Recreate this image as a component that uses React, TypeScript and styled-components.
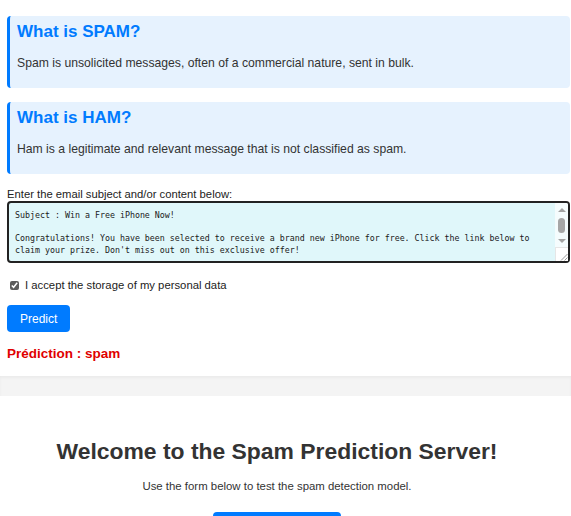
import React from 'react';
import styled, { createGlobalStyle } from 'styled-components';

const GlobalStyle = createGlobalStyle`
  body {
    margin: 0;
    background: #f4f4f4;
    font-family: 'Liberation Sans', Arial, sans-serif;
    color: #333;
  }
`;

const FormSection = styled.section`
  background: #fff;
  padding: 16px 1px 14px 7px;
`;

const InfoBox = styled.div`
  background: #e6f2fe;
  border-left: 3px solid #007bff;
  border-radius: 4px;
  padding: 6px 7px 17px;
  margin-bottom: 14px;

  &:last-of-type {
    margin-bottom: 0;
  }
`;

const InfoTitle = styled.h2`
  margin: 0;
  font-size: 17px;
  line-height: 20px;
  color: #007bff;
`;

const InfoText = styled.p`
  margin: 13px 0 0;
  font-size: 12.2px;
  line-height: 16px;
  color: #333;
`;

const FieldLabel = styled.label`
  display: block;
  margin-top: 13px;
  font-size: 11.25px;
  line-height: 13px;
  color: #222;
`;

const InputWrap = styled.div`
  position: relative;
`;

const MessageInput = styled.textarea`
  display: block;
  box-sizing: border-box;
  width: 100%;
  height: 62px;
  margin: 0;
  padding: 7px 21px 5px 6px;
  border: 2px solid #222;
  border-radius: 4px;
  background: #e0f7fa;
  font-family: 'DejaVu Sans Mono', 'Liberation Mono', monospace;
  font-size: 8.3px;
  line-height: 11.5px;
  color: #1a1a1a;
  resize: none;
  overflow: hidden;
`;

/* drawn scrollbar, the headless browser hides the native one */
const ScrollTrack = styled.div`
  position: absolute;
  top: 2px;
  right: 2px;
  bottom: 2px;
  width: 13px;
  display: flex;
  flex-direction: column;
  align-items: center;
  background: #f5fcfd;
  border-radius: 0 2px 2px 0;
  pointer-events: none;
`;

const Arrow = styled.div<{ $down?: boolean }>`
  width: 0;
  height: 0;
  margin: ${(p) => (p.$down ? '0 0 4px' : '5px 0 6px')};
  border-left: 4px solid transparent;
  border-right: 4px solid transparent;
  ${(p) => (p.$down ? 'border-top: 4px solid #a3a3a3;' : 'border-bottom: 4px solid #a3a3a3;')}
`;

const Thumb = styled.div`
  width: 7px;
  height: 15px;
  border-radius: 4px;
  background: #a6a6a6;
`;

const Spacer = styled.div`
  flex: 1;
`;

const Grip = styled.div`
  align-self: stretch;
  height: 13px;
  background: #fff;
  border-top: 1px solid #e6e6e6;
  border-left: 1px solid #e6e6e6;
  display: flex;
  align-items: flex-end;
  justify-content: flex-end;
`;

const ScrollBar = () => (
  <ScrollTrack>
    <Arrow />
    <Thumb />
    <Spacer />
    <Arrow $down />
    <Grip>
      <svg width="9" height="9" viewBox="0 0 9 9">
        <path d="M8.5 2 L2 8.5 M8.5 5.5 L5.5 8.5" stroke="#9a9a9a" strokeWidth="1" />
      </svg>
    </Grip>
  </ScrollTrack>
);

const ConsentRow = styled.label`
  display: flex;
  align-items: center;
  margin-top: 15px;
  font-size: 11.3px;
  line-height: 14px;
  color: #222;

  input {
    width: 9px;
    height: 9px;
    margin: 0 6px 0 3px;
    accent-color: #5c5c5c;
  }
`;

const PrimaryButton = styled.button`
  display: block;
  margin-top: 13px;
  height: 27px;
  padding: 0 13px;
  border: none;
  border-radius: 4px;
  background: #007bff;
  color: #fff;
  font-family: 'Liberation Sans', Arial, sans-serif;
  font-size: 12px;
  cursor: pointer;
`;

const Result = styled.p`
  margin: 14px 0 0;
  font-size: 13.5px;
  line-height: 16px;
  font-weight: bold;
  color: #e00000;
`;

const Band = styled.div`
  height: 20px;
  box-shadow: inset 0 2px 3px rgba(0, 0, 0, 0.04);
`;

const Welcome = styled.section`
  background: #fff;
  padding: 42px 37px 40px 20px;
  text-align: center;
`;

const WelcomeTitle = styled.h1`
  margin: 0;
  font-size: 22.9px;
  line-height: 26px;
  color: #333;
`;

const WelcomeText = styled.p`
  margin: 15px 0 0;
  font-size: 11.4px;
  line-height: 14px;
  color: #333;
`;

const StartButton = styled(PrimaryButton)`
  display: inline-block;
  margin-top: 19px;
  width: 128px;
  height: 32px;
`;

const sample = `Subject : Win a Free iPhone Now!

Congratulations! You have been selected to receive a brand new iPhone for free. Click the link below to claim your prize. Don't miss out on this exclusive offer!`;

export default function App() {
  return (
    <>
      <GlobalStyle />
      <FormSection>
        <InfoBox>
          <InfoTitle>What is SPAM?</InfoTitle>
          <InfoText>Spam is unsolicited messages, often of a commercial nature, sent in bulk.</InfoText>
        </InfoBox>
        <InfoBox>
          <InfoTitle>What is HAM?</InfoTitle>
          <InfoText>Ham is a legitimate and relevant message that is not classified as spam.</InfoText>
        </InfoBox>
        <FieldLabel htmlFor="message">Enter the email subject and/or content below:</FieldLabel>
        <InputWrap>
          <MessageInput id="message" defaultValue={sample} spellCheck={false} />
          <ScrollBar />
        </InputWrap>
        <ConsentRow>
          <input type="checkbox" defaultChecked />
          I accept the storage of my personal data
        </ConsentRow>
        <PrimaryButton type="button">Predict</PrimaryButton>
        <Result>Prédiction : spam</Result>
      </FormSection>
      <Band />
      <Welcome>
        <WelcomeTitle>Welcome to the Spam Prediction Server!</WelcomeTitle>
        <WelcomeText>Use the form below to test the spam detection model.</WelcomeText>
        <StartButton type="button">Get started</StartButton>
      </Welcome>
    </>
  );
}
